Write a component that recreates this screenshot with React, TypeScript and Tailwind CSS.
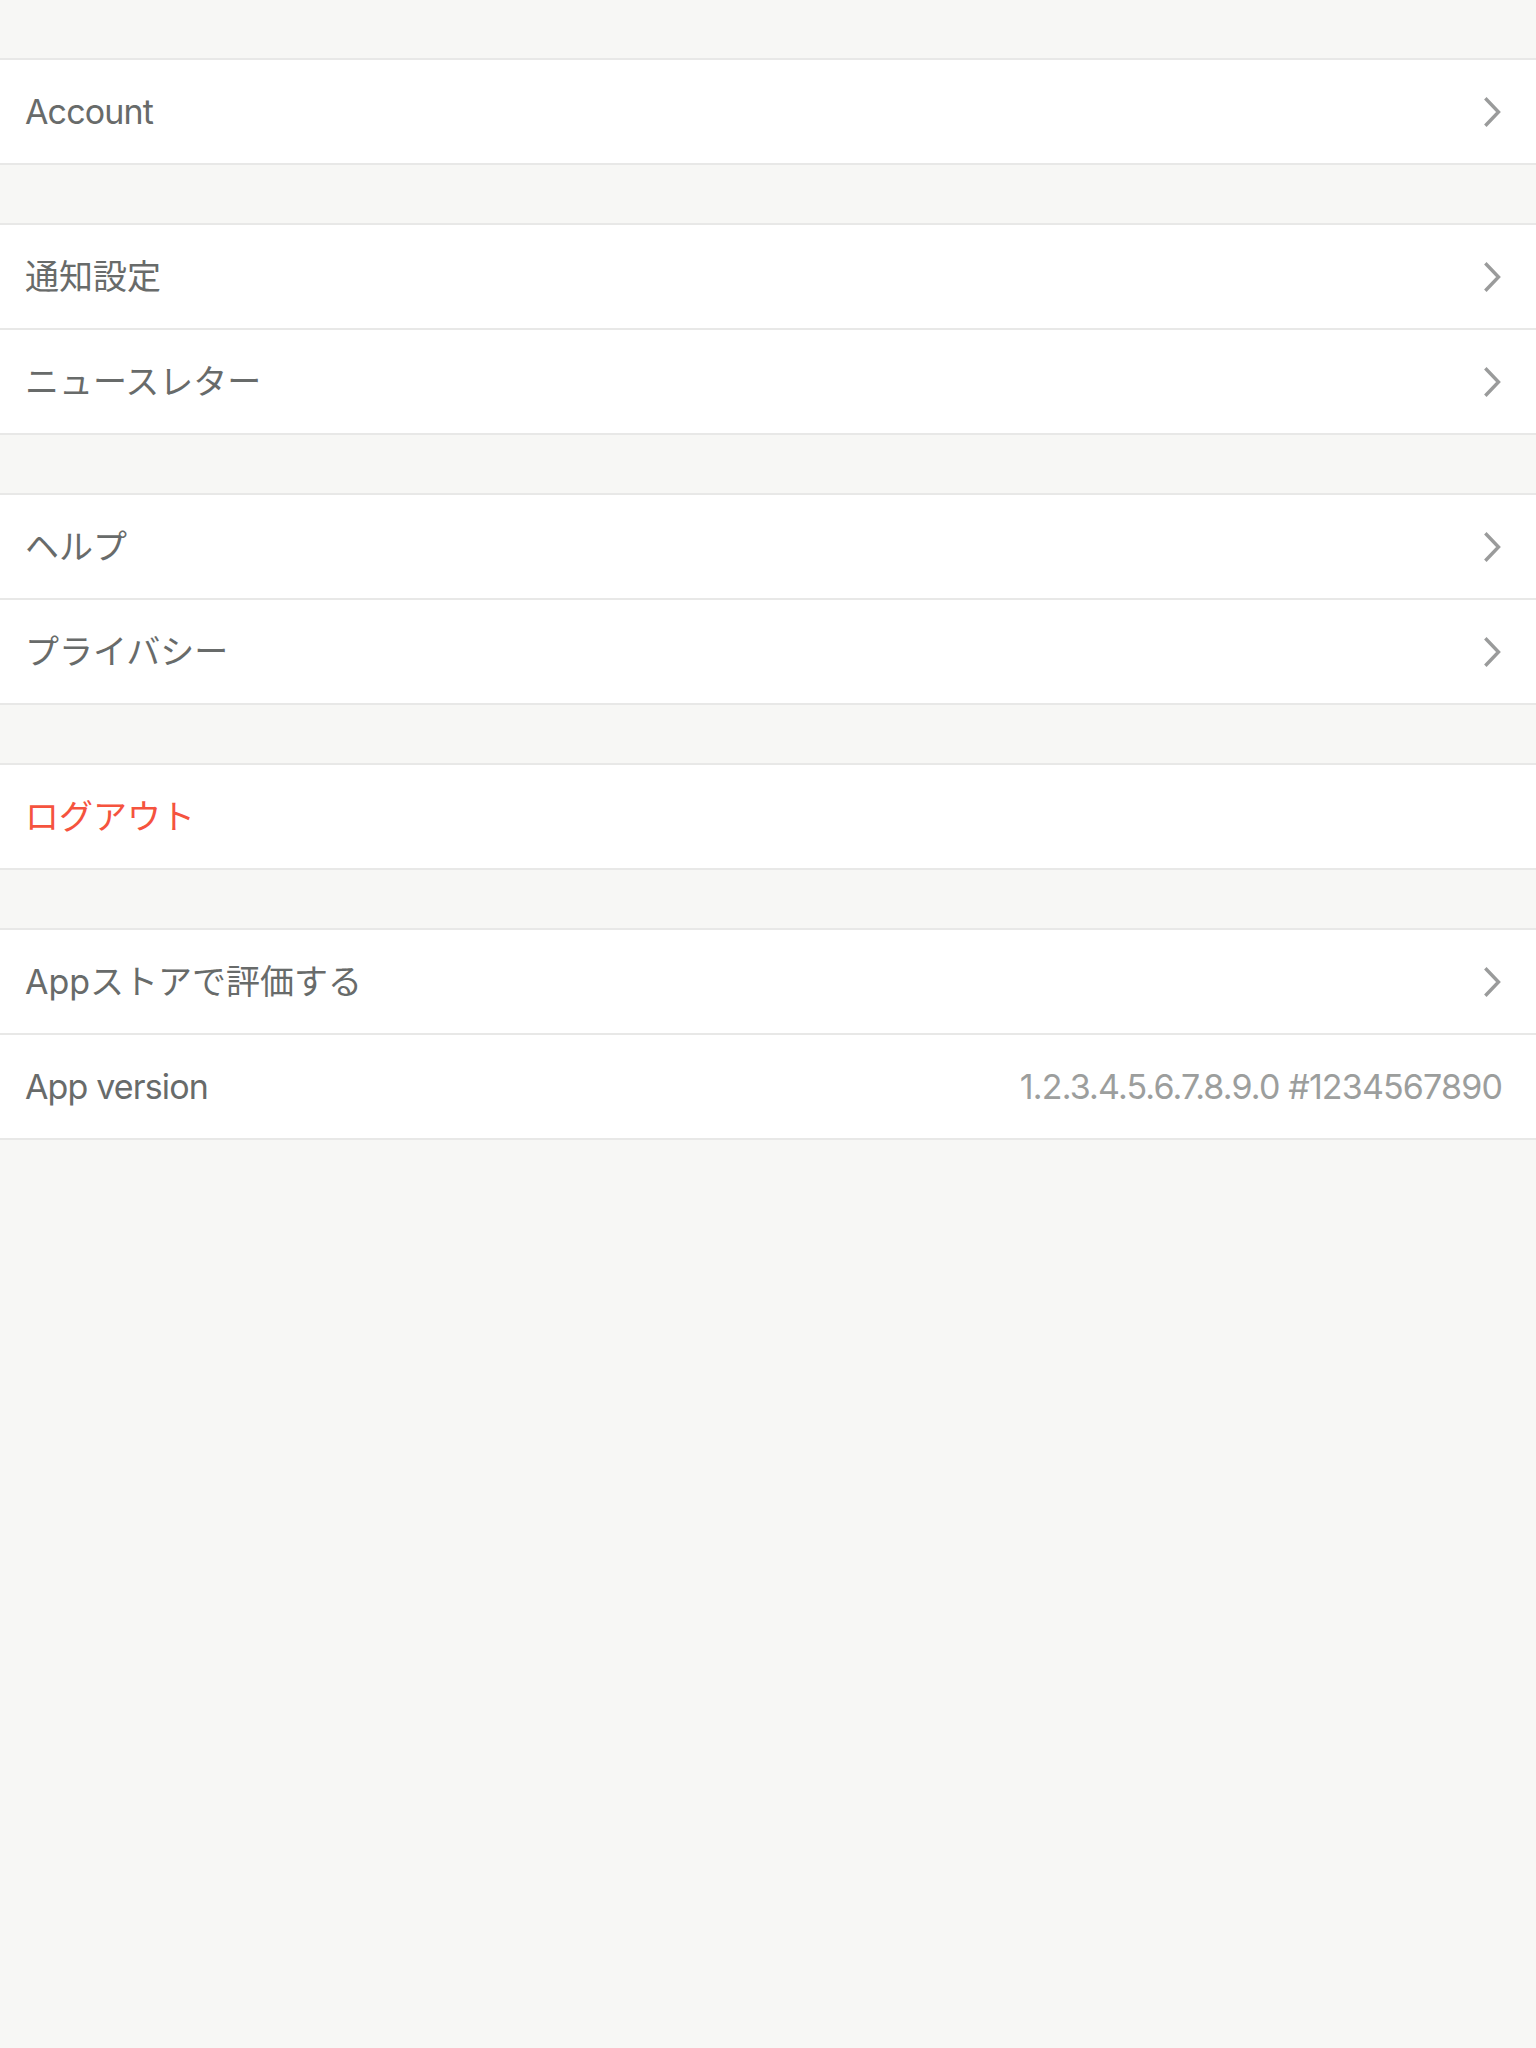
import React from "react";

const Chevron = () => (
  <svg width="18" height="30" viewBox="0 0 18 30" className="shrink-0">
    <path d="M2.5 2.5 L14.5 15 L2.5 27.5" fill="none" stroke="#9a9b9b" strokeWidth="3.4" strokeLinecap="square" strokeLinejoin="miter" />
  </svg>
);

type RowProps = { label: string; red?: boolean; chevron?: boolean; value?: string; latin?: boolean };

const Row = ({ label, red, chevron = true, value, latin }: RowProps) => (
  <div className="flex h-[105px] items-center justify-between border-b-2 border-[#e8e8e7] bg-white pl-[25px] pr-[34px]">
    <span
      className={
        red
          ? "text-[34px] text-[#f5533e]"
          : latin
          ? "text-[34px] tracking-[-0.025em] text-[#686b6a]"
          : "text-[34px] text-[#686b6a]"
      }
    >
      {label}
    </span>
    {value ? (
      <span className="text-[34px] tracking-[-0.025em] text-[#9c9e9d]">{value}</span>
    ) : chevron ? (
      <Chevron />
    ) : null}
  </div>
);

const Section = ({ children }: { children: React.ReactNode }) => (
  <div className="border-t-2 border-[#e8e8e7]">{children}</div>
);

export default function App() {
  return (
    <div
      className="flex min-h-screen w-full flex-col gap-[58px] bg-[#f7f7f5] pt-[58px] leading-none"
      style={{ fontFamily: 'Inter, "Noto Sans CJK JP", sans-serif' }}
    >
      <Section>
        <Row label="Account" latin />
      </Section>
      <Section>
        <Row label="通知設定" />
        <Row label="ニュースレター" />
      </Section>
      <Section>
        <Row label="ヘルプ" />
        <Row label="プライバシー" />
      </Section>
      <Section>
        <Row label="ログアウト" red chevron={false} />
      </Section>
      <Section>
        <Row label="Appストアで評価する" />
        <Row label="App version" latin value="1.2.3.4.5.6.7.8.9.0 #1234567890" />
      </Section>
    </div>
  );
}
